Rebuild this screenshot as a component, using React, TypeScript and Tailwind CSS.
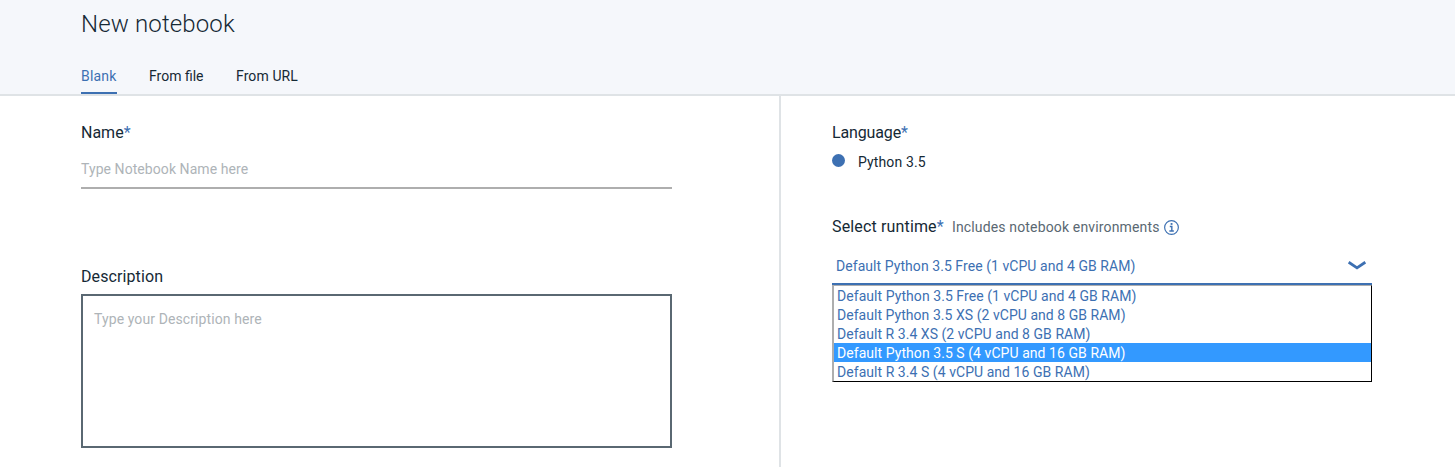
const runtimes = [
  { label: 'Default Python 3.5 Free (1 vCPU and 4 GB RAM)', tracking: 'tracking-[0.06px]' },
  { label: 'Default Python 3.5 XS (2 vCPU and 8 GB RAM)', tracking: 'tracking-[0.04px]' },
  { label: 'Default R 3.4 XS (2 vCPU and 8 GB RAM)', tracking: 'tracking-[0.04px]' },
  { label: 'Default Python 3.5 S (4 vCPU and 16 GB RAM)', tracking: 'tracking-[0.06px]', active: true },
  { label: 'Default R 3.4 S (4 vCPU and 16 GB RAM)', tracking: 'tracking-[0.05px]' },
];

function Required() {
  return <span className="text-[#3d70b2]">*</span>;
}

function InfoIcon() {
  return (
    <svg className="ml-[5px] h-[15px] w-[15px]" viewBox="0 0 14 14" fill="none" stroke="#3d70b2">
      <circle cx="7" cy="7" r="6.4" strokeWidth="1.1" />
      <path d="M5.4 6h1.9v4M5 10.3h4.2" strokeWidth="1.3" />
      <path d="M6.2 3.7h1.7" strokeWidth="1.7" />
    </svg>
  );
}

function Header() {
  return (
    <header className="flex h-[96px] flex-col justify-between border-b-2 border-[#dfe3e6] bg-[#f5f7fb] pl-[81px]">
      <h1 className="pt-[8px] text-[24px] leading-[32px] font-light tracking-[0.14px]">New notebook</h1>
      <nav className="flex gap-8 text-[14px] leading-[20px]">
        <a className="h-[28px] w-[36px] border-b-2 border-[#3d70b2] tracking-[0.2px] whitespace-nowrap text-[#3d70b2]">Blank</a>
        <a className="w-[55px] whitespace-nowrap">From file</a>
        <a className="tracking-[0.1px] whitespace-nowrap">From URL</a>
      </nav>
    </header>
  );
}

function Details() {
  return (
    <section className="flex w-[781px] flex-col border-r-2 border-[#dfe3e6] pt-[26px] pr-[107px] pl-[81px]">
      <label className="h-[24px] text-[16px] leading-[22px]">
        Name
        <Required />
      </label>
      <div className="mt-[13px] h-[30px] border-b-2 border-[#aeaeae] text-[14px] leading-[20px] tracking-[0.07px] text-[#aeb4b8]">
        Type Notebook Name here
      </div>
      <label className="mt-[77px] h-[28px] text-[16px] leading-[22px] tracking-[0.1px]">Description</label>
      <div className="h-[154px] border-2 border-[#5a6872] px-[11px] pt-[13px] text-[14px] leading-[20px] tracking-[0.1px] text-[#aeb4b8]">
        Type your Description here
      </div>
    </section>
  );
}

function Environment() {
  return (
    <section className="flex w-[591px] flex-col pt-[26px] pl-[51px]">
      <div className="h-[26px] text-[16px] leading-[22px] tracking-[-0.14px]">
        Language
        <Required />
      </div>
      <div className="flex h-[20px] text-[14px] leading-[20px]">
        <span className="mt-[6px] mr-[13px] h-[13px] w-[13px] shrink-0 rounded-full bg-[#3d70b2]" />
        <span className="pt-[4px] tracking-[0.13px]">Python 3.5</span>
      </div>
      <div className="mt-[48px] flex h-[22px] items-center whitespace-nowrap">
        <span className="w-[120px] text-[16px] leading-[22px] tracking-[0.15px]">
          Select runtime
          <Required />
        </span>
        <span className="w-[207px] text-[14px] leading-[20px] tracking-[0.15px] text-[#5a6872]">Includes notebook environments</span>
        <InfoIcon />
      </div>
      <div className="flex h-[47px] justify-between border-b-2 border-[#3d70b2] pr-[6px] pl-[4px] text-[#3d70b2]">
        <span className="pt-[18px] text-[14px] leading-[20px] tracking-[0.06px]">{runtimes[0].label}</span>
        <svg className="mt-[22px] h-[11px] w-[18px]" viewBox="0 0 18 11" fill="none" stroke="currentColor" strokeWidth="2.8">
          <path d="M0.7 2.2L9 7.8L17.3 2.2" />
        </svg>
      </div>
      <ul className="border-t border-r border-b border-l-2 border-t-[#aeaeae] border-r-black border-b-black border-l-[#aeaeae] bg-white text-[14px] leading-[20px]">
        {runtimes.map((r) => (
          <li key={r.label} className={r.active ? 'h-[19px] bg-[#3399ff] pl-[3px] text-white' : 'h-[19px] pl-[3px] text-[#3d70b2]'}>
            <span className={r.tracking}>{r.label}</span>
          </li>
        ))}
      </ul>
    </section>
  );
}

export default function App() {
  return (
    <div className="h-[467px] w-[1455px] overflow-hidden bg-white font-['Roboto',sans-serif] text-[#152935]">
      <Header />
      <main className="flex h-[371px]">
        <Details />
        <Environment />
      </main>
    </div>
  );
}
